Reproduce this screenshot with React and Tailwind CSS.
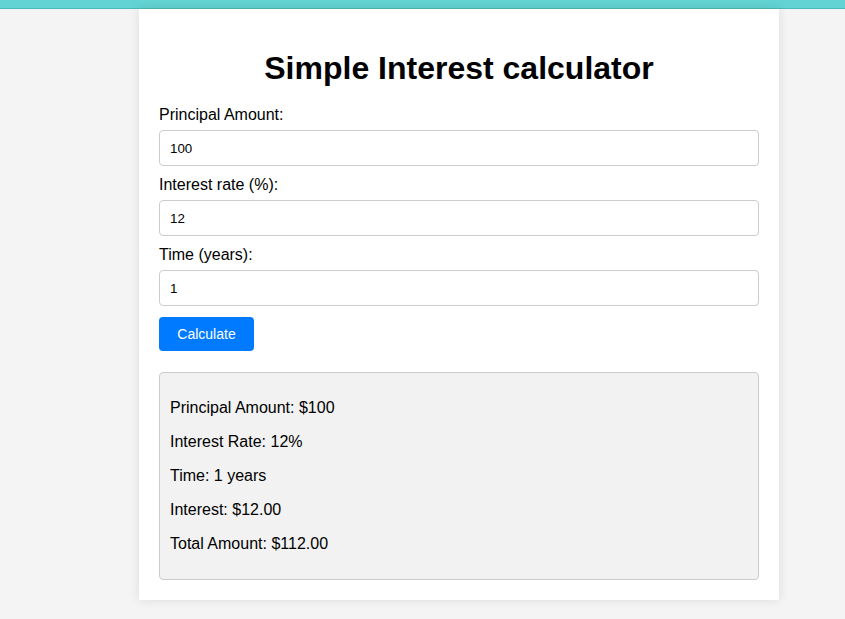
import { useState } from "react";

const Field = ({ label, value, onChange }) => (
  <div className="flex flex-col">
    <label className="text-[16px] leading-[18px] text-black">{label}</label>
    <input
      type="number"
      value={value}
      onChange={(e) => onChange(e.target.value)}
      className="mt-[6px] h-[36px] w-full rounded-[4px] border border-[#cccccc] bg-white px-[10px] text-[13.33px] text-black outline-none"
    />
  </div>
);

const App = () => {
  const [principal, setPrincipal] = useState("100");
  const [rate, setRate] = useState("12");
  const [time, setTime] = useState("1");

  const p = parseFloat(principal) || 0;
  const r = parseFloat(rate) || 0;
  const t = parseFloat(time) || 0;
  const interest = (p * r * t) / 100;

  return (
    <div
      className="min-h-screen bg-[#f4f4f4]"
      style={{ fontFamily: '"Liberation Sans", Arial, sans-serif' }}
    >
      <div className="h-[8px] bg-[#63d3d3] border-b border-[#4cb8b8] box-content" />
      <div className="ml-[139px] w-[640px] bg-white px-[20px] pt-[20px] pb-[20px] shadow-[0_0_10px_rgba(0,0,0,0.1)]">
        <h1 className="mt-[21px] mb-[19px] text-center text-[32px] leading-[37px] font-bold text-black">
          Simple Interest calculator
        </h1>

        <div className="flex flex-col gap-[10px]">
          <Field label="Principal Amount:" value={principal} onChange={setPrincipal} />
          <Field label="Interest rate (%):" value={rate} onChange={setRate} />
          <Field label="Time (years):" value={time} onChange={setTime} />
        </div>

        <button className="mt-[11px] h-[34px] w-[95px] rounded-[4px] bg-[#007bff] text-[14px] text-white">
          Calculate
        </button>

        <div className="mt-[21px] rounded-[4px] border border-[#cccccc] bg-[#f2f2f2] px-[10px] py-[10px] text-[16px] leading-[18px] text-black">
          <p className="my-[16px]">Principal Amount: ${principal}</p>
          <p className="my-[16px]">Interest Rate: {rate}%</p>
          <p className="my-[16px]">Time: {time} years</p>
          <p className="my-[16px]">Interest: ${interest.toFixed(2)}</p>
          <p className="my-[16px]">Total Amount: ${(p + interest).toFixed(2)}</p>
        </div>
      </div>
    </div>
  );
};

export default App;
